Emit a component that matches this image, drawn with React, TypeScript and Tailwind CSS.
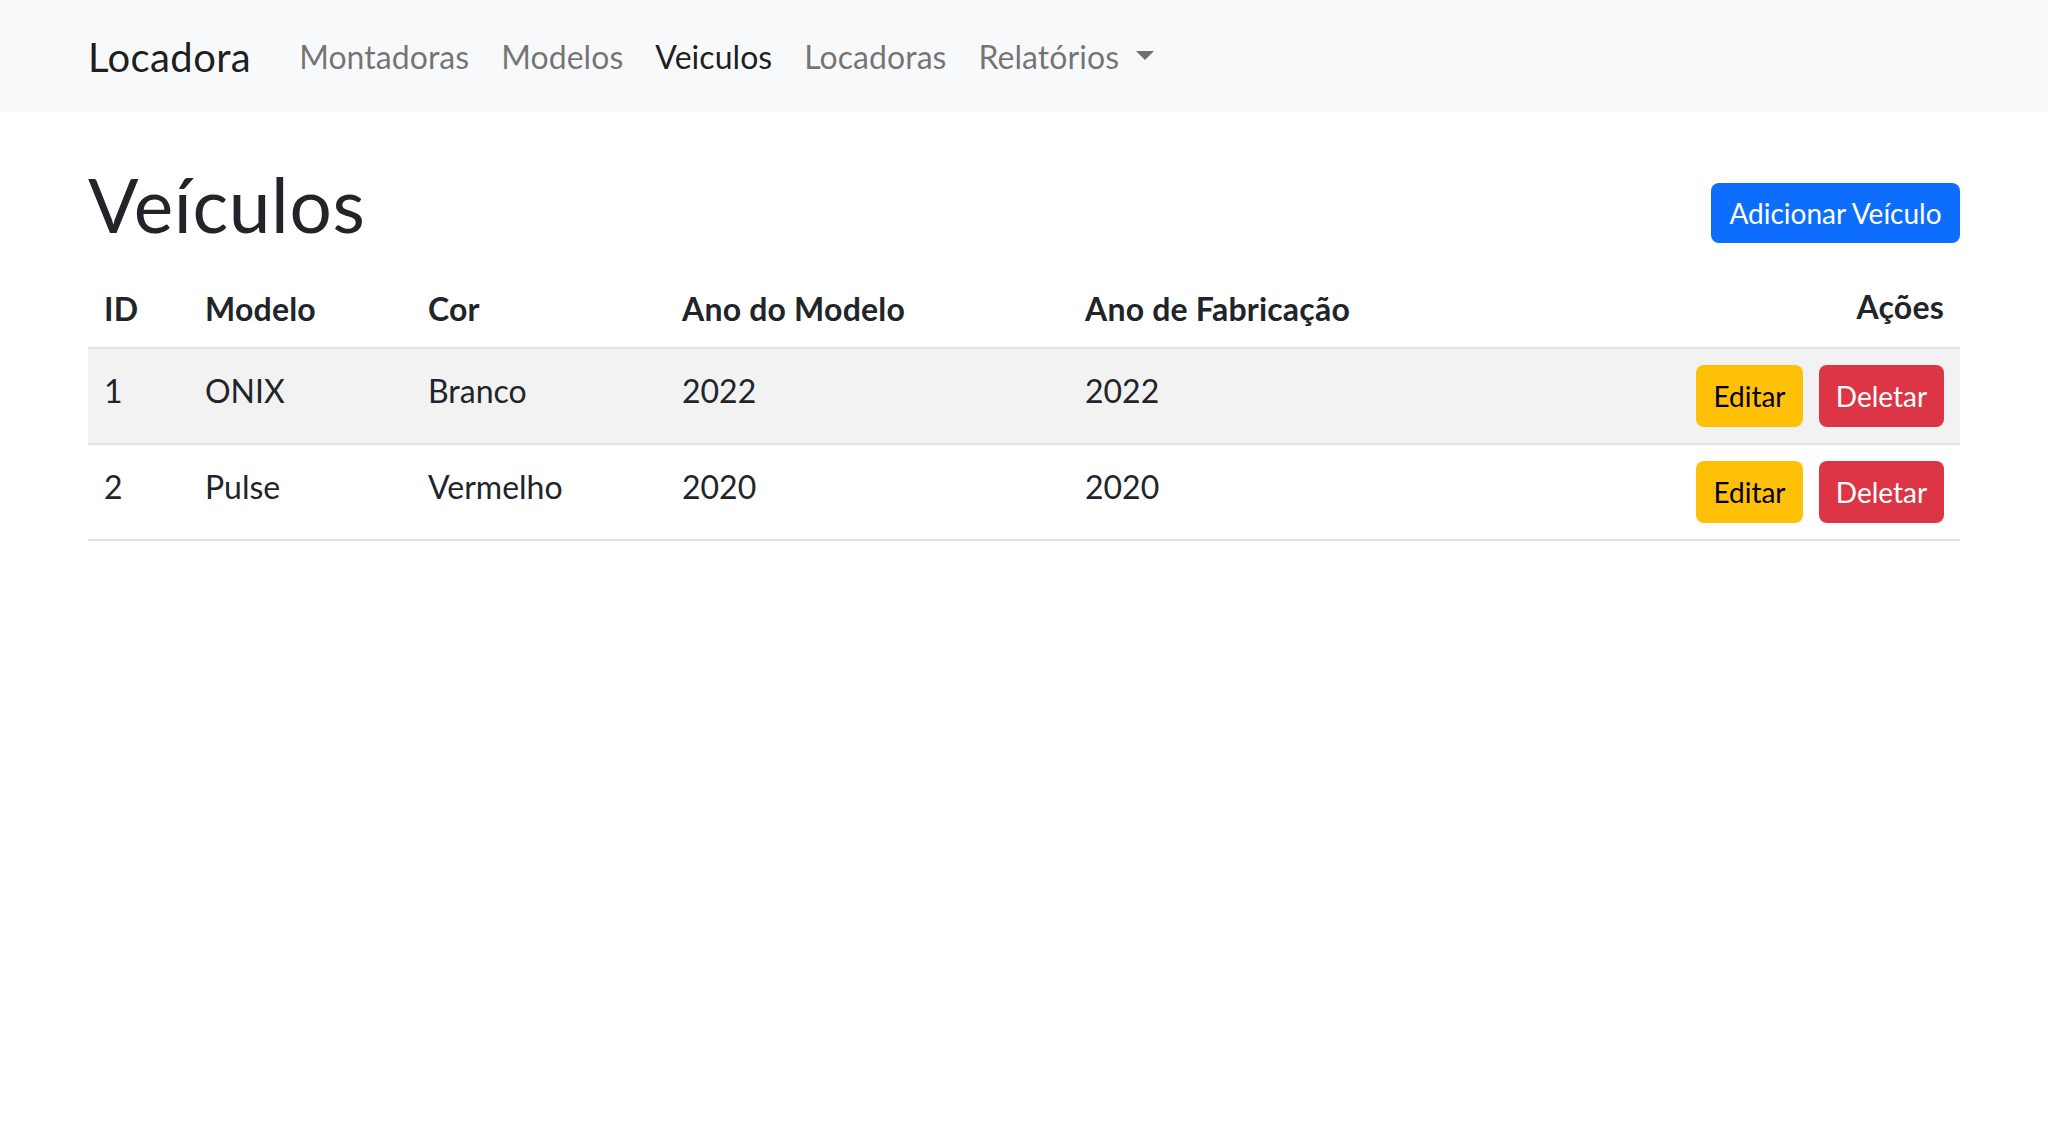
import React from "react";

const rows = [
  { id: 1, modelo: "ONIX", cor: "Branco", anoModelo: 2022, anoFab: 2022, striped: true },
  { id: 2, modelo: "Pulse", cor: "Vermelho", anoModelo: 2020, anoFab: 2020, striped: false },
];

export default function App() {
  return (
    <div className="min-h-[1138px] bg-white font-['Lato','Noto_Sans',sans-serif] text-[#212529]">
      <nav className="h-[112px] bg-[#f8f9fa]">
        <div className="mx-auto flex h-full w-[1920px] items-center px-[24px]">
          <a className="mr-[32px] pb-[9px] pt-[11px] text-[40px] leading-[60px] tracking-[0.4px] text-[rgba(0,0,0,0.9)]">Locadora</a>
          <ul className="flex items-center tracking-[0.05px]">
            <li><a className="block px-[16px] pb-[15px] pt-[17px] text-[32px] leading-[48px] text-[rgba(0,0,0,0.55)]">Montadoras</a></li>
            <li><a className="block px-[16px] pb-[15px] pt-[17px] text-[32px] leading-[48px] text-[rgba(0,0,0,0.55)]">Modelos</a></li>
            <li><a className="block px-[16px] pb-[15px] pt-[17px] text-[32px] leading-[48px] text-[rgba(0,0,0,0.9)]">Veiculos</a></li>
            <li><a className="block px-[16px] pb-[15px] pt-[17px] text-[32px] leading-[48px] text-[rgba(0,0,0,0.55)]">Locadoras</a></li>
            <li>
              <a className="flex items-center px-[16px] pb-[15px] pt-[17px] text-[32px] leading-[48px] text-[rgba(0,0,0,0.55)]">
                Relatórios
                <span className="ml-[17px] mt-[-4px] inline-block h-0 w-0 border-x-[9.6px] border-t-[9.6px] border-x-transparent border-t-[rgba(0,0,0,0.55)]" />
              </a>
            </li>
          </ul>
        </div>
      </nav>

      <main className="mx-auto w-[1920px] px-[24px]">
        <div className="mt-[48px] flex items-center justify-between">
          <h1 className="mb-[16px] text-[74.7px] font-normal leading-[1.2] tracking-[0.7px]">Veículos</h1>
          <button className="h-[60px] w-[249px] rounded-[8px] bg-[#0d6efd] text-center text-[28px] leading-[42px] text-white">
            Adicionar Veículo
          </button>
        </div>

        <table className="mt-[1px] w-full table-fixed border-collapse">
          <thead>
            <tr className="border-b-2 border-[#dee2e6]">
              <th className="w-[101px] px-[16px] pb-[14px] pt-[18px] text-left text-[32px] font-bold leading-[48px] tracking-[0.2px]">ID</th>
              <th className="w-[223px] px-[16px] pb-[14px] pt-[18px] text-left text-[32px] font-bold leading-[48px] tracking-[0.2px]">Modelo</th>
              <th className="w-[254px] px-[16px] pb-[14px] pt-[18px] text-left text-[32px] font-bold leading-[48px] tracking-[0.2px]">Cor</th>
              <th className="w-[403px] px-[16px] pb-[14px] pt-[18px] text-left text-[32px] font-bold leading-[48px] tracking-[0.2px]">Ano do Modelo</th>
              <th className="w-[467px] px-[16px] pb-[14px] pt-[18px] text-left text-[32px] font-bold leading-[48px] tracking-[0.2px]">Ano de Fabricação</th>
              <th className="w-[424px] px-[16px] py-[16px] text-right text-[32px] font-bold leading-[48px] tracking-[0.2px]">Ações</th>
            </tr>
          </thead>
          <tbody>
            {rows.map((r) => (
              <tr key={r.id} className={`border-b-2 border-[#dee2e6] ${r.striped ? "bg-[#f2f2f2]" : "bg-white"}`}>
                <td className="px-[16px] pb-[14px] pt-[18px] align-top text-[32px] leading-[48px]">{r.id}</td>
                <td className="px-[16px] pb-[14px] pt-[18px] align-top text-[32px] leading-[48px]">{r.modelo}</td>
                <td className="px-[16px] pb-[14px] pt-[18px] align-top text-[32px] leading-[48px]">{r.cor}</td>
                <td className="px-[16px] pb-[14px] pt-[18px] align-top text-[32px] leading-[48px]">{r.anoModelo}</td>
                <td className="px-[16px] pb-[14px] pt-[18px] align-top text-[32px] leading-[48px]">{r.anoFab}</td>
                <td className="p-[16px] align-top">
                  <div className="flex justify-end gap-[16px]">
                    <button className="h-[62px] w-[107px] rounded-[8px] bg-[#ffc107] text-center text-[28px] leading-[42px] text-black">
                      Editar
                    </button>
                    <button className="h-[62px] w-[125px] rounded-[8px] bg-[#dc3545] text-center text-[28px] leading-[42px] text-white">
                      Deletar
                    </button>
                  </div>
                </td>
              </tr>
            ))}
          </tbody>
        </table>
      </main>
    </div>
  );
}
